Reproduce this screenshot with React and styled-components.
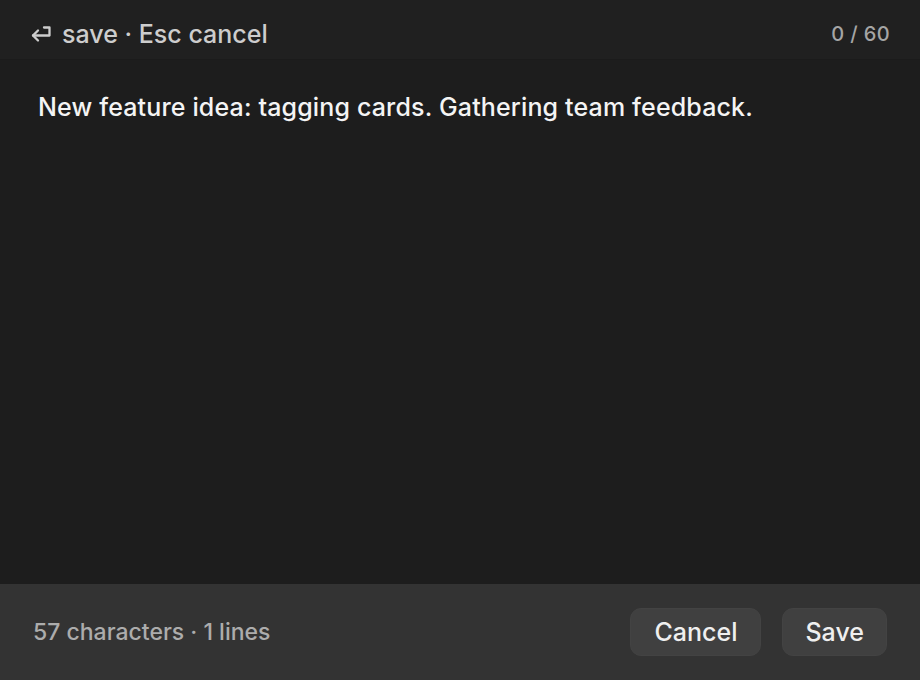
import React from "react";
import styled, { createGlobalStyle } from "styled-components";

const Global = createGlobalStyle`
  html, body { margin: 0; padding: 0; background: #1d1d1d; }
  body { font-family: Inter, "Noto Sans", "Liberation Sans", sans-serif; }
  #root { height: 680px; }
`;

const Frame = styled.div`
  width: 920px;
  height: 680px;
  display: flex;
  flex-direction: column;
  background: #1d1d1d;
  overflow: hidden;
`;

const Header = styled.div`
  height: 60px;
  box-sizing: border-box;
  display: flex;
  align-items: center;
  justify-content: space-between;
  padding: 8px 30px 0 30px;
  background: #202020;
  border-bottom: 1px solid #1b1b1b;
`;

const Hint = styled.div`
  display: flex;
  align-items: center;
  gap: 10px;
  color: #cdcdcd;
  font-size: 25px;
  font-weight: 500;
`;

const Counter = styled.div`
  color: #a5a5a5;
  font-size: 20px;
  font-weight: 500;
  letter-spacing: 0.4px;
`;

const Body = styled.div`
  flex: 1;
  padding: 32px 38px;
  color: #f4f4f4;
  font-size: 25px;
  font-weight: 500;
  letter-spacing: 0.15px;
`;

const Footer = styled.div`
  height: 96px;
  box-sizing: border-box;
  display: flex;
  align-items: center;
  justify-content: space-between;
  padding: 0 33px;
  background: #333333;
`;

const Stats = styled.div`
  color: #acacac;
  font-size: 23px;
  font-weight: 500;
`;

const Actions = styled.div`
  display: flex;
  gap: 21px;
`;

const Button = styled.button`
  height: 48px;
  padding: 0 ${(p) => p.$px}px;
  border-radius: 11px;
  border: 1px solid #434343;
  background: #404040;
  color: #efefef;
  font-family: inherit;
  font-size: 25px;
  font-weight: 500;
  cursor: pointer;
`;

const EnterIcon = () => (
  <svg width="22" height="18" viewBox="0 0 22 18" fill="none" stroke="#cdcdcd" strokeWidth="2.3" strokeLinecap="round" strokeLinejoin="round">
    <path d="M14 2.5 H19.5 V10.5 H3" />
    <path d="M8 5.5 L3 10.5 L8 15.5" />
  </svg>
);

export default function App() {
  return (
    <Frame>
      <Global />
      <Header>
        <Hint>
          <EnterIcon />
          <span>save · Esc cancel</span>
        </Hint>
        <Counter>0 / 60</Counter>
      </Header>
      <Body>New feature idea: tagging cards. Gathering team feedback.</Body>
      <Footer>
        <Stats>57 characters · 1 lines</Stats>
        <Actions>
          <Button $px={23}>Cancel</Button>
          <Button $px={22}>Save</Button>
        </Actions>
      </Footer>
    </Frame>
  );
}
